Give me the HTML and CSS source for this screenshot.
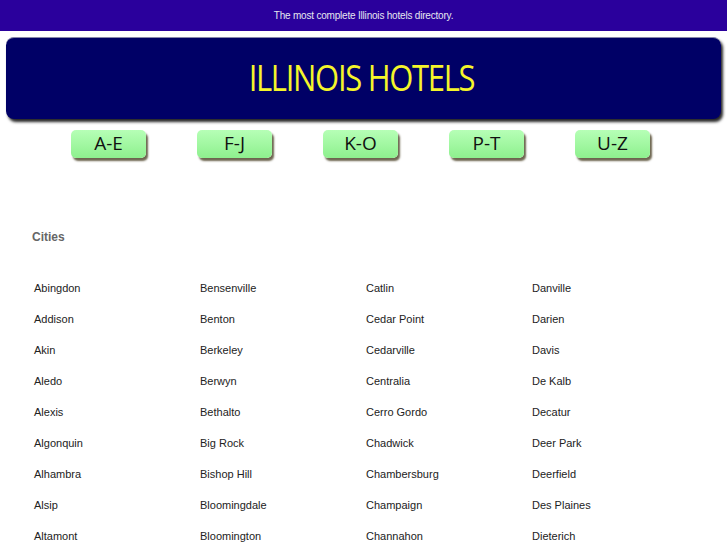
FILE: index.html
```html
<!DOCTYPE html>
<html>
<head>
<meta charset="utf-8">
<link rel="stylesheet" href="styles.css">
</head>
<body>
<div class="topbar">The most complete Illinois hotels directory.</div>
<div class="banner"><span class="title">ILLINOIS HOTELS</span></div>
<nav class="letters">
  <a class="btn">A-E</a>
  <a class="btn">F-J</a>
  <a class="btn">K-O</a>
  <a class="btn">P-T</a>
  <a class="btn">U-Z</a>
</nav>
<h2 class="cities-title">Cities</h2>
<div class="cities">
  <div>Abingdon</div><div>Bensenville</div><div>Catlin</div><div>Danville</div>
  <div>Addison</div><div>Benton</div><div>Cedar Point</div><div>Darien</div>
  <div>Akin</div><div>Berkeley</div><div>Cedarville</div><div>Davis</div>
  <div>Aledo</div><div>Berwyn</div><div>Centralia</div><div>De Kalb</div>
  <div>Alexis</div><div>Bethalto</div><div>Cerro Gordo</div><div>Decatur</div>
  <div>Algonquin</div><div>Big Rock</div><div>Chadwick</div><div>Deer Park</div>
  <div>Alhambra</div><div>Bishop Hill</div><div>Chambersburg</div><div>Deerfield</div>
  <div>Alsip</div><div>Bloomingdale</div><div>Champaign</div><div>Des Plaines</div>
  <div>Altamont</div><div>Bloomington</div><div>Channahon</div><div>Dieterich</div>
</div>
</body>
</html>
```
FILE: styles.css
```css
html, body { margin: 0; padding: 0; background: #fff; }
body { font-family: "Liberation Sans", Arial, sans-serif; }
.topbar {
  height: 31px;
  background: #2a009c;
  color: #e6e6f0;
  font-size: 10px;
  line-height: 31px;
  text-align: center;
  letter-spacing: -0.2px;
}
.banner {
  margin: 6px 6px 0 6px;
  height: 81px;
  background: #000066;
  border-radius: 8px;
  border-top: 1px solid #8888aa;
  box-shadow: 2px 3px 3px rgba(0,0,0,0.85);
  display: flex;
  align-items: center;
  justify-content: center;
}
.title {
  font-family: "Open Sans", sans-serif;
  font-size: 36px;
  color: #f5f52a;
  letter-spacing: -1.5px;
  transform: scaleX(0.86);
  padding-right: 4px;
  margin-top: -3px;
}
.letters {
  display: flex;
  padding-left: 71px;
  gap: 51px;
  margin-top: 11px;
}
.btn {
  width: 75px;
  height: 28px;
  border-radius: 5px;
  background: linear-gradient(#b6ffb6, #8ef08e);
  box-shadow: 2px 3px 2px rgba(60,50,20,0.75);
  font-family: "Open Sans", sans-serif;
  font-size: 19px;
  line-height: 26px;
  text-align: center;
  color: #111;
}
.cities-title {
  margin: 71px 0 0 32px;
  font-size: 12px;
  color: #666;
  font-weight: bold;
  line-height: 16px;
}
.cities {
  display: grid;
  grid-template-columns: repeat(4, 166px);
  padding-left: 34px;
  margin-top: 28px;
  font-size: 11px;
  color: #222;
  line-height: 31px;
}
```
